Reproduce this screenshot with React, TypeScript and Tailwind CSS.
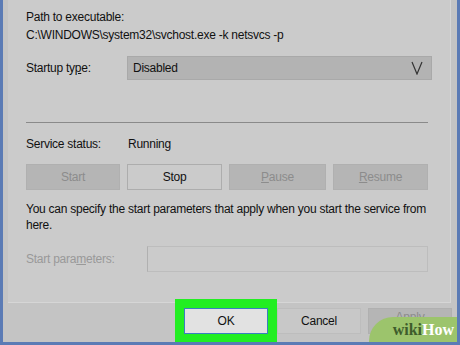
import React from "react";

export default function App() {
  const font = { fontFamily: '"Liberation Sans", Arial, sans-serif' };
  return (
    <div
      className="relative w-[460px] h-[345px] overflow-hidden bg-[#c4c4c4] border-l-[3px] border-r-[3px] border-b-[3px] border-[#5b7bb5] text-[12px] tracking-[-0.25px] text-[#111]"
      style={font}
    >
      {/* Tab panel */}
      <div className="ml-[5px] w-[443px] h-[303px] bg-[#cbcbcb] border-r border-b border-[#d6d6d6] pl-[18px] pr-[18px]">
        <div className="pt-[9px] leading-[16px]">Path to executable:</div>
        <div className="mt-[2px] leading-[16px]">C:\WINDOWS\system32\svchost.exe -k netsvcs -p</div>
        <div className="mt-[13px] flex items-center">
          <div className="w-[101px]">
            Startup ty<span className="underline">p</span>e:
          </div>
          <div className="flex-1 h-[24px] bg-[#b3b3b3] border border-[#a9a9a9] flex items-center justify-between pl-[5px] pr-[8px]">
            <span>Disabled</span>
            <svg width="12" height="14" viewBox="0 0 12 14">
              <path d="M1 1 L6 13 L11 1" fill="none" stroke="#333" strokeWidth="1.2" />
            </svg>
          </div>
        </div>
        <div className="mt-[42px] h-px bg-[#8a8a8a] mr-[4px]" />
        <div className="mt-[13px] flex leading-[16px]">
          <div className="w-[102px]">Service status:</div>
          <div>Running</div>
        </div>
        <div className="mt-[12px] flex gap-[7px] h-[26px] pr-[4px]">
          <div className="w-[94px] bg-[#b5b5b5] border border-[#b0b0b0] flex items-center justify-center text-[#8c8c8c]">
            Start
          </div>
          <div className="w-[95px] bg-[#cbcbcb] border border-[#adadad] flex items-center justify-center">
            Stop
          </div>
          <div className="w-[97px] bg-[#b5b5b5] border border-[#b0b0b0] flex items-center justify-center text-[#8c8c8c]">
            <span><span className="underline">P</span>ause</span>
          </div>
          <div className="flex-1 bg-[#b5b5b5] border border-[#b0b0b0] flex items-center justify-center text-[#8c8c8c]">
            <span><span className="underline">R</span>esume</span>
          </div>
        </div>
        <div className="mt-[11px] leading-[16px] pr-[2px]">
          You can specify the start parameters that apply when you start the service from here.
        </div>
        <div className="mt-[13px] flex items-center">
          <div className="w-[121px] text-[#999]">
            Start para<span className="underline">m</span>eters:
          </div>
          <div className="flex-1 h-[26px] border border-[#bdbdbd] border-l-[#b0b0b0] mr-[4px]" />
        </div>
      </div>

      {/* Bottom buttons */}
      <div className="flex h-[39px]">
        <div className="w-[172px]" />
        <div className="w-[102px] bg-[#22ee22] -mt-[4px] h-[45px] flex items-start justify-center pt-[9px]">
          <div className="w-[84px] h-[26px] bg-[#e2e2e2] border border-[#3a7fc0] flex items-center justify-center">
            OK
          </div>
        </div>
        <div className="w-[84px] h-[26px] mt-[5px] bg-[#c8c8c8] border border-[#bdbdbd] flex items-center justify-center">
          Cancel
        </div>
        <div className="ml-[7px] w-[84px] h-[26px] mt-[5px] bg-[#b5b5b5] border border-[#b0b0b0] flex items-start justify-center pt-[2px] leading-[12px] text-[#8c8c8c]">
          Apply
        </div>
      </div>

      {/* wikiHow watermark */}
      <div className="absolute right-0 bottom-0 w-[88px] h-[25px] bg-[#9cc46c] rounded-tl-[24px] flex items-center justify-end pr-[3px] tracking-normal">
        <span className="text-[16px] leading-[18px] font-bold text-[#3e5c2b]" style={{ fontFamily: '"Liberation Serif", serif' }}>wiki</span>
        <span className="text-[16px] leading-[18px] font-bold text-white" style={{ fontFamily: '"Liberation Serif", serif' }}>How</span>
      </div>
    </div>
  );
}
